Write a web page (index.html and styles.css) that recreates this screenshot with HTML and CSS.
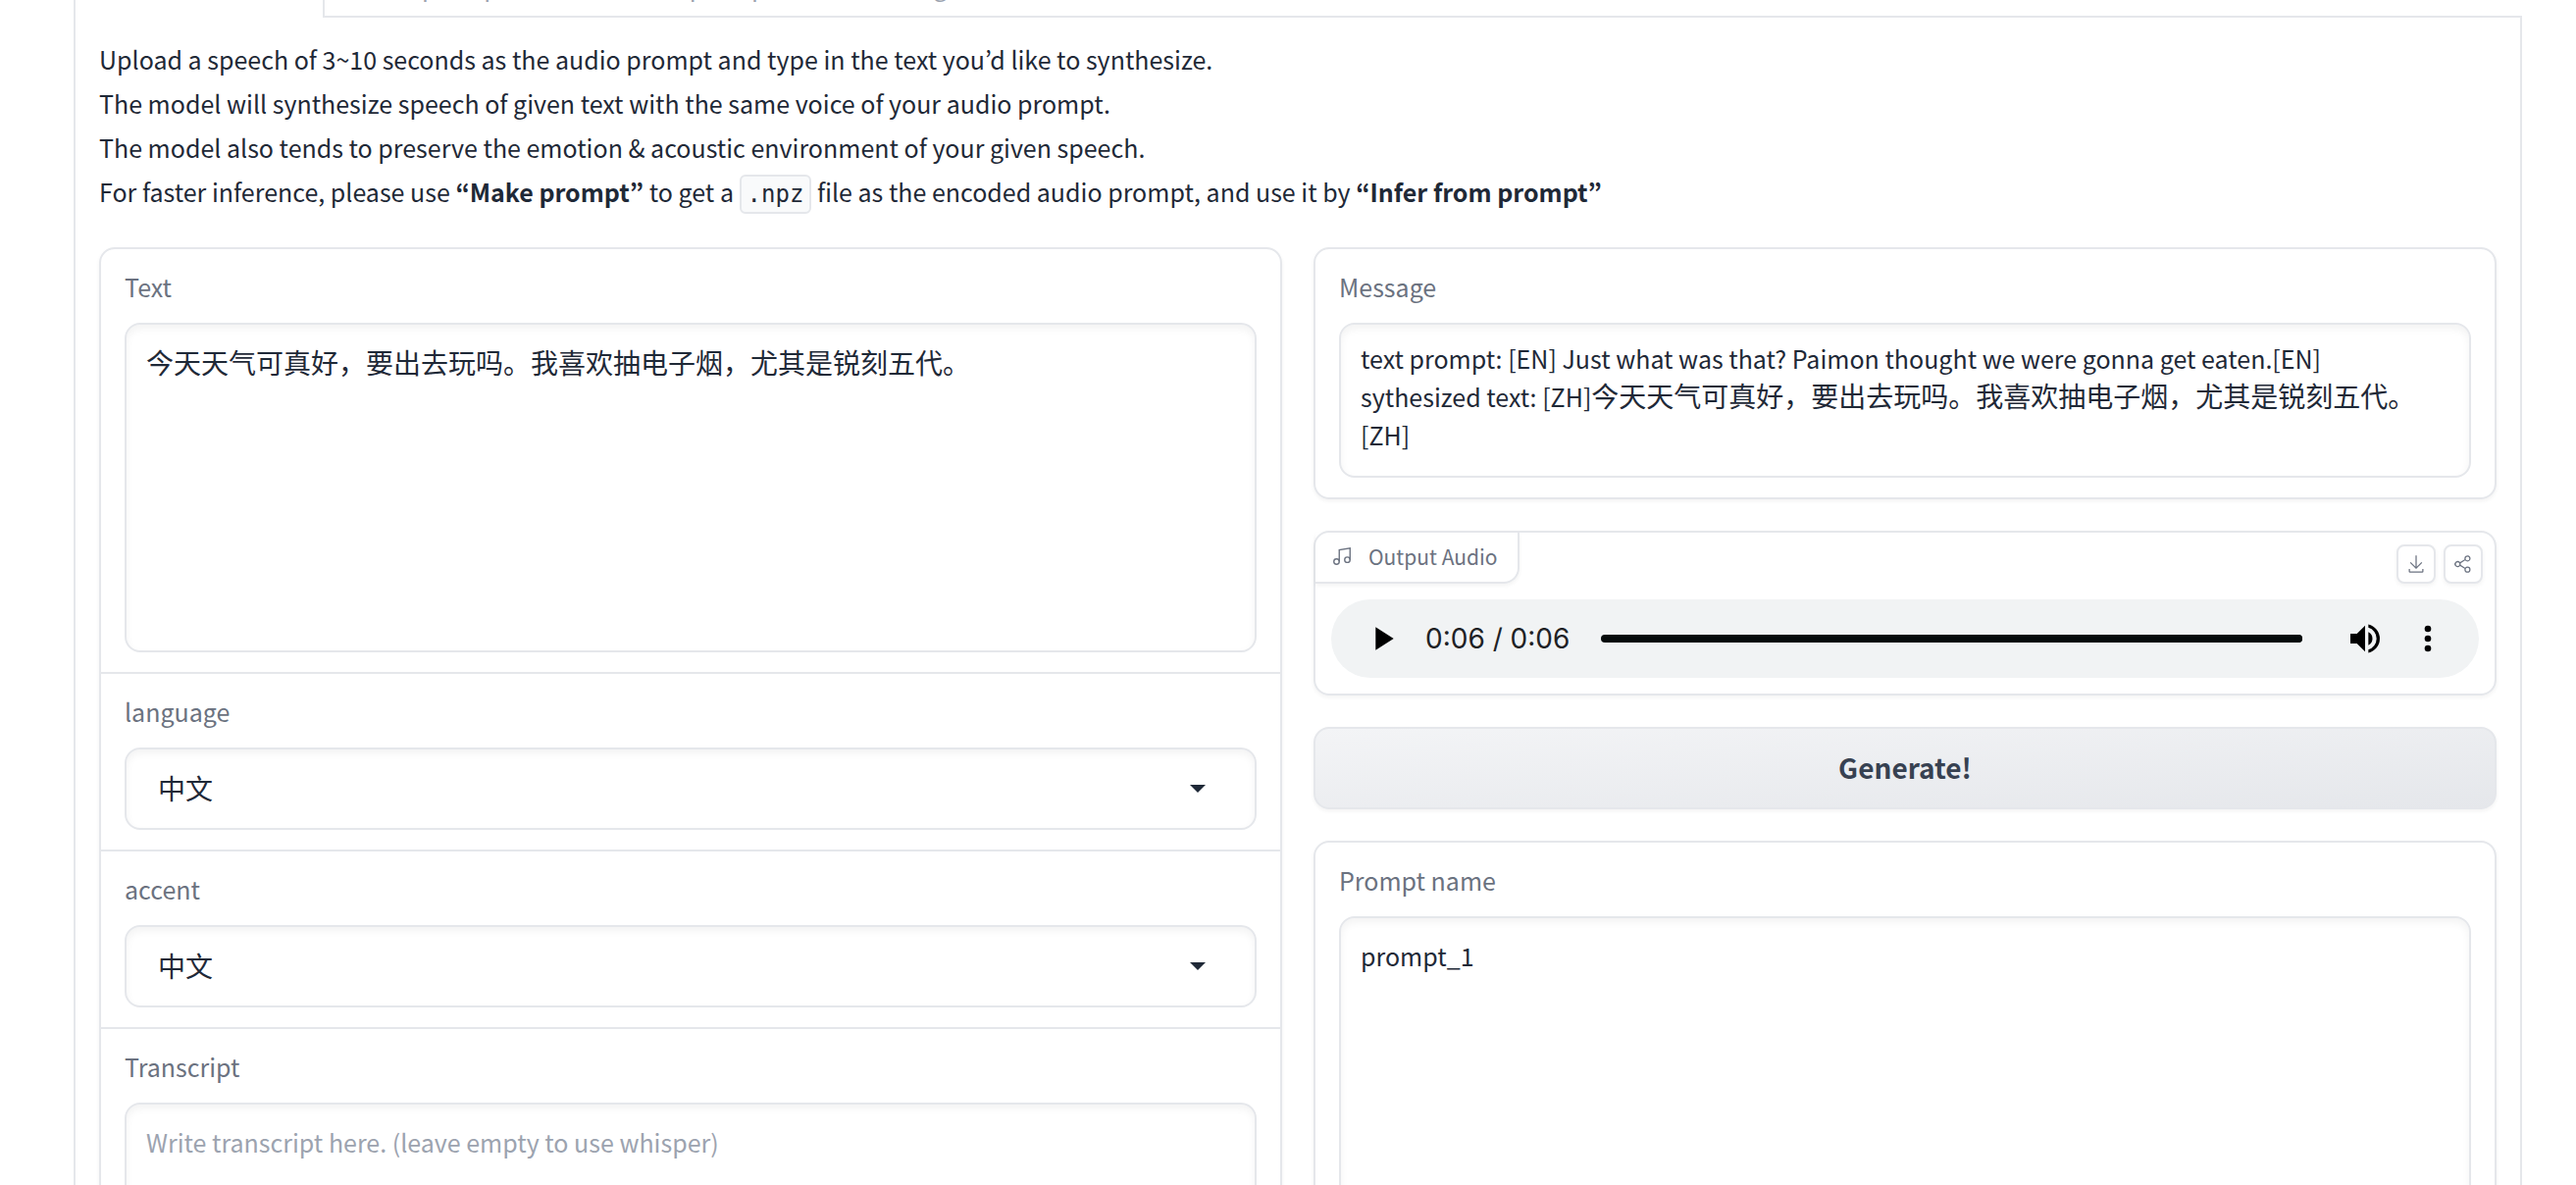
FILE: index.html
```html
<!DOCTYPE html>
<html lang="en">
<head>
<meta charset="utf-8">
<title>VALL-E X</title>
<link rel="stylesheet" href="styles.css">
</head>
<body>
<main class="app">
  <nav class="tabs" role="tablist">
    <button class="tab tab-active" role="tab" aria-selected="true">Infer from audio</button>
    <button class="tab" role="tab">Make prompt</button>
    <button class="tab" role="tab">Infer from prompt</button>
    <button class="tab" role="tab">Infer long text</button>
    <span class="tabs-rest"></span>
  </nav>
  <section class="pane">
    <div class="intro">
      <p>Upload a speech of 3~10 seconds as the audio prompt and type in the text you’d like to synthesize.</p>
      <p>The model will synthesize speech of given text with the same voice of your audio prompt.</p>
      <p>The model also tends to preserve the emotion &amp; acoustic environment of your given speech.</p>
      <p>For faster inference, please use <strong>“Make prompt”</strong> to get a <code>.npz</code> file as the encoded audio prompt, and use it by <strong>“Infer from prompt”</strong></p>
    </div>
    <div class="columns">
      <div class="block form">
        <div class="field">
          <label for="text">Text</label>
          <textarea id="text" class="box box-text zh">今天天气可真好，要出去玩吗。我喜欢抽电子烟，尤其是锐刻五代。</textarea>
        </div>
        <div class="field">
          <label for="language">language</label>
          <div class="dropdown">
            <select id="language" class="box zh"><option>中文</option></select>
            <svg class="arrow" viewBox="0 0 16 8" aria-hidden="true"><path d="M0 0h16L8 8z"/></svg>
          </div>
        </div>
        <div class="field">
          <label for="accent">accent</label>
          <div class="dropdown">
            <select id="accent" class="box zh"><option>中文</option></select>
            <svg class="arrow" viewBox="0 0 16 8" aria-hidden="true"><path d="M0 0h16L8 8z"/></svg>
          </div>
        </div>
        <div class="field">
          <label for="transcript">Transcript</label>
          <textarea id="transcript" class="box box-text" placeholder="Write transcript here. (leave empty to use whisper)"></textarea>
        </div>
      </div>
      <div class="results">
        <div class="block field">
          <label for="message">Message</label>
          <output id="message" class="box box-message">text prompt: [EN] Just what was that? Paimon thought we were gonna get eaten.[EN]<br>sythesized text: [ZH]<span class="zh zh-inline" lang="zh">今天天气可真好，要出去玩吗。我喜欢抽电子烟，尤其是锐刻五代。</span>[ZH]</output>
        </div>
        <div class="block audio">
          <div class="audio-head">
            <div class="audio-label">
              <svg class="note" viewBox="0 0 24 24" aria-hidden="true"><path d="M9 18V5l12-2v13"/><circle cx="6" cy="18" r="3"/><circle cx="18" cy="16" r="3"/></svg>
              Output Audio
            </div>
            <div class="actions">
              <button class="action" aria-label="Download"><svg viewBox="0 0 32 32"><path d="M26 24v4H6v-4H4v4a2 2 0 0 0 2 2h20a2 2 0 0 0 2-2v-4z"/><path d="M26 14l-1.400-1.400L17 20.200V2h-2v18.200l-7.600-7.600L6 14l10 10z"/></svg></button>
              <button class="action" aria-label="Share"><svg viewBox="0 0 32 32"><path d="M23 20a5 5 0 0 0-3.890 1.890l-7.310-4.570a4.460 4.460 0 0 0 0-2.640l7.310-4.570A5 5 0 1 0 18 7a4.790 4.790 0 0 0 .2 1.320l-7.310 4.570a5 5 0 1 0 0 6.220l7.310 4.570A4.790 4.790 0 0 0 18 25a5 5 0 1 0 5-5Zm0-16a3 3 0 1 1-3 3a3 3 0 0 1 3-3ZM7 19a3 3 0 1 1 3-3a3 3 0 0 1-3 3Zm16 9a3 3 0 1 1 3-3a3 3 0 0 1-3 3Z"/></svg></button>
            </div>
          </div>
          <div class="player">
            <button class="control" aria-label="Play"><svg viewBox="0 0 24 24"><path d="M8 5v14l11-7z"/></svg></button>
            <span class="time">0:06 / 0:06</span>
            <input class="seek" type="range" min="0" max="6" value="6" aria-label="Position">
            <button class="control" aria-label="Mute"><svg viewBox="0 0 24 24"><path d="M3 9v6h4l5 5V4L7 9H3zm13.500 3A4.500 4.500 0 0 0 14 7.970v8.050A4.470 4.470 0 0 0 16.500 12zM14 3.230v2.060a7 7 0 0 1 0 13.420v2.060a9 9 0 0 0 0-17.540z"/></svg></button>
            <button class="control" aria-label="More options"><svg viewBox="0 0 24 24"><circle cx="12" cy="6" r="2"/><circle cx="12" cy="12" r="2"/><circle cx="12" cy="18" r="2"/></svg></button>
          </div>
        </div>
        <button class="generate">Generate!</button>
        <div class="block field">
          <label for="prompt-name">Prompt name</label>
          <textarea id="prompt-name" class="box box-text">prompt_1</textarea>
        </div>
      </div>
    </div>
  </section>
</main>
</body>
</html>
```
FILE: styles.css
```css
* {
  box-sizing: border-box;
}

body {
  margin: 0;
  height: 100vh;
  overflow: hidden;
  background: #fff;
  color: #1f2937;
  font: 25px/39px "Noto Sans CJK KR", sans-serif;
}

button,
select,
textarea {
  margin: 0;
  color: inherit;
  font: inherit;
}

p {
  margin: 0;
}

svg {
  display: block;
  fill: currentColor;
}

.app {
  padding: 0 55px 0 75px;
}

/* The page is scrolled so that only the foot of the tab row shows */
.tabs {
  display: flex;
  margin-top: -42px;
}

.tab {
  height: 60px;
  padding: 0 32px 4px;
  border: 0;
  border-bottom: 2px solid #e5e7eb;
  background: none;
  color: #9ca3af;
}

.tab-active {
  border: 2px solid #e5e7eb;
  border-bottom: 0;
  color: #1f2937;
}

.tabs-rest {
  flex: 1;
  border-bottom: 2px solid #e5e7eb;
}

.pane {
  padding: 20px 24px;
  border: 2px solid #e5e7eb;
  border-top: 0;
}

.intro {
  line-height: 45px;
}

code {
  padding: 4px 6px;
  border: 2px solid #e5e7eb;
  border-radius: 6px;
  background: #f9fafb;
  font: 24px/24px "DejaVu Sans Mono", monospace;
}

.columns {
  display: grid;
  grid-template-columns: 1fr 1fr;
  gap: 32px;
  margin-top: 34px;
}

.results {
  display: flex;
  flex-direction: column;
  gap: 32px;
}

.block {
  border: 2px solid #e5e7eb;
  border-radius: 16px;
  box-shadow: 0 2px 4px rgba(0, 0, 0, 0.05);
}

.field {
  display: flex;
  flex-direction: column;
  gap: 18px;
  padding: 20px 24px;
}

.form .field + .field {
  border-top: 2px solid #e5e7eb;
}

label {
  color: #6b7280;
  line-height: 37px;
}

.box {
  display: block;
  width: 100%;
  border: 2px solid #e5e7eb;
  border-radius: 16px;
  background: #fff;
  box-shadow: inset 0 4px 8px rgba(0, 0, 0, 0.05);
  outline: 0;
}

.box-text {
  height: 336px;
  padding: 19px 20px;
  resize: none;
}

.box-text::placeholder {
  color: #9ca3af;
}

.box-message {
  min-height: 158px;
  padding: 15px 20px;
}

.zh {
  font-family: "Noto Sans CJK SC", sans-serif;
  font-size: 28px;
}

.zh-inline {
  line-height: 28px;
}

.dropdown {
  display: grid;
  align-items: center;
}

.dropdown > * {
  grid-area: 1 / 1;
}

.dropdown .box {
  height: 84px;
  padding: 0 32px 2px;
  appearance: none;
}

.arrow {
  width: 16px;
  margin-right: 52px;
  justify-self: end;
  pointer-events: none;
}

.audio-head {
  display: flex;
  justify-content: space-between;
  align-items: flex-start;
}

.audio-label {
  display: flex;
  align-items: center;
  gap: 16px;
  height: 52px;
  padding: 0 20px 2px 16px;
  border: 2px solid #e5e7eb;
  border-width: 0 2px 2px 0;
  border-radius: 0 0 16px;
  box-shadow: 0 2px 4px rgba(0, 0, 0, 0.05);
  color: #6b7280;
  font-size: 21px;
}

.note {
  width: 22px;
  fill: none;
  stroke: currentColor;
  stroke-width: 1.5;
}

.actions {
  display: flex;
  gap: 8px;
  padding: 12px 12px 0 0;
}

.action {
  display: grid;
  place-items: center;
  width: 40px;
  height: 40px;
  padding: 0;
  border: 2px solid #e5e7eb;
  border-radius: 8px;
  background: #fff;
  box-shadow: 0 2px 4px rgba(0, 0, 0, 0.05);
  color: #6b7280;
}

.action svg {
  width: 20px;
}

.player {
  display: flex;
  align-items: center;
  gap: 24px;
  height: 80px;
  margin: 16px;
  padding: 0 32px;
  border-radius: 40px;
  background: #f1f3f4;
  color: #000;
}

.control {
  width: 40px;
  height: 40px;
  padding: 0;
  border: 0;
  background: none;
}

.time {
  color: #202124;
  font-family: Inter, sans-serif;
  font-size: 28px;
}

.seek {
  flex: 1;
  height: 8px;
  margin: 0 20px 0 8px;
  border-radius: 4px;
  background: #050a0a;
  appearance: none;
}

.seek::-webkit-slider-thumb {
  width: 8px;
  height: 8px;
  border-radius: 4px;
  background: #050a0a;
  appearance: none;
}

.generate {
  height: 84px;
  padding: 0 0 2px;
  border: 2px solid #e5e7eb;
  border-radius: 16px;
  background: linear-gradient(to bottom right, #f3f4f6, #e5e7eb);
  box-shadow: 0 2px 4px rgba(0, 0, 0, 0.05);
  color: #374151;
  font-size: 28px;
  font-weight: 700;
}
```
